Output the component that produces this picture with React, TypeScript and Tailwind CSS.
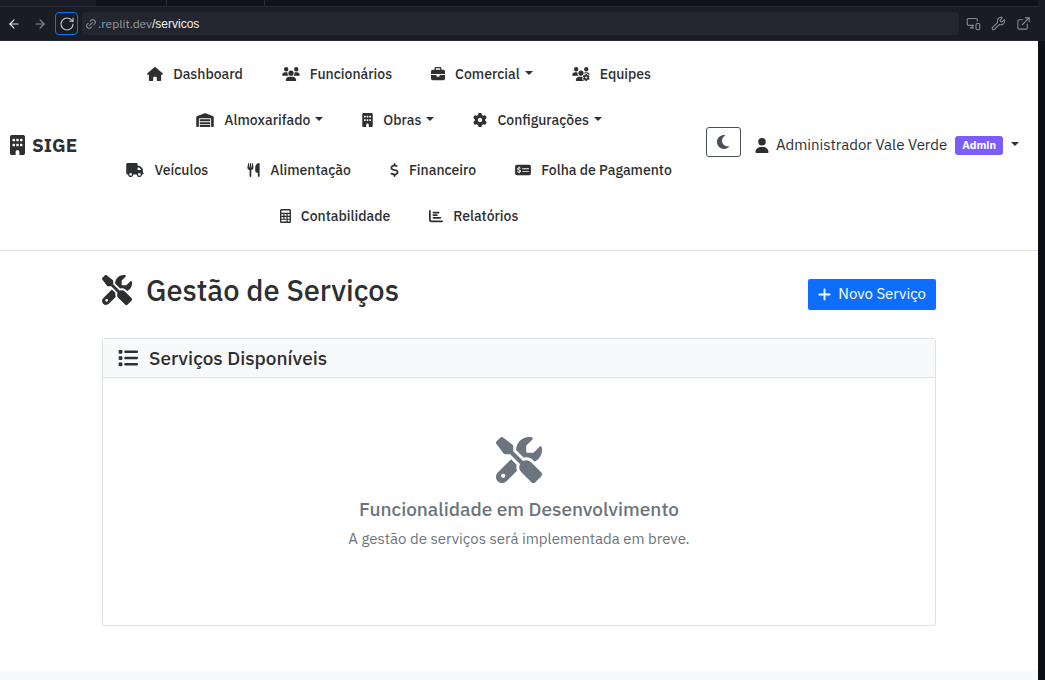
import type { ComponentType, ReactNode } from "react";
import {
  FaBriefcase,
  FaBuilding,
  FaChartBar,
  FaDollarSign,
  FaGear,
  FaHouse,
  FaList,
  FaMoneyCheckDollar,
  FaMoon,
  FaPlus,
  FaScrewdriverWrench,
  FaTruck,
  FaUser,
  FaUsers,
  FaUsersGear,
  FaUtensils,
  FaWarehouse,
} from "react-icons/fa6";
import { ArrowLeft, ArrowRight, ExternalLink, Link2, MonitorSmartphone, RotateCw, Wrench } from "lucide-react";

type IconType = ComponentType<{ className?: string }>;

function CalculatorIcon({ className }: { className?: string }) {
  return (
    <svg viewBox="0 0 11 14" fill="currentColor" fillRule="evenodd" className={className}>
      <path d="M1.5 0h8A1.5 1.5 0 0 1 11 1.5v11A1.5 1.5 0 0 1 9.5 14h-8A1.5 1.5 0 0 1 0 12.5v-11A1.5 1.5 0 0 1 1.5 0zM1.4 1.4v2.4h8.2V1.4zM1.4 5v1.8h1.9V5zM4.5 5v1.8h2V5zM7.7 5v1.8h1.9V5zM1.4 7.9v1.8h1.9V7.9zM4.5 7.9v1.8h2V7.9zM7.7 7.9v1.8h1.9V7.9zM1.4 10.8v1.8h5.1v-1.8zM7.7 10.8v1.8h1.9v-1.8z" />
    </svg>
  );
}

type NavEntry = { label: string; icon: IconType; size: string; menu?: boolean };

const navRows: NavEntry[][] = [
  [
    { label: "Dashboard", icon: FaHouse, size: "w-4" },
    { label: "Funcionários", icon: FaUsers, size: "w-[18px]" },
    { label: "Comercial", icon: FaBriefcase, size: "w-3.5", menu: true },
    { label: "Equipes", icon: FaUsersGear, size: "w-[18px]" },
  ],
  [
    { label: "Almoxarifado", icon: FaWarehouse, size: "w-[18px]", menu: true },
    { label: "Obras", icon: FaBuilding, size: "w-[11px]", menu: true },
    { label: "Configurações", icon: FaGear, size: "w-3.5", menu: true },
  ],
  [
    { label: "Veículos", icon: FaTruck, size: "w-[18px]" },
    { label: "Alimentação", icon: FaUtensils, size: "w-[13px]" },
    { label: "Financeiro", icon: FaDollarSign, size: "w-[9px]" },
    { label: "Folha de Pagamento", icon: FaMoneyCheckDollar, size: "w-4" },
  ],
  [
    { label: "Contabilidade", icon: CalculatorIcon, size: "w-[11px]" },
    { label: "Relatórios", icon: FaChartBar, size: "w-3.5" },
  ],
];

function Caret() {
  return <span className="mb-0.5 border-x-4 border-t-4 border-x-transparent border-t-current" />;
}

function NavItem({ label, icon: Icon, size, menu }: NavEntry) {
  const content: ReactNode = (
    <>
      <span className={`mr-2.5 flex ${size}`}>
        <Icon className="h-3.5 w-full" />
      </span>
      {label}
      {menu && (
        <span className="ml-[5px] flex">
          <Caret />
        </span>
      )}
    </>
  );
  const style = "flex items-center whitespace-nowrap text-[14px] leading-5 font-medium";
  return (
    <li>
      {menu ? (
        <button type="button" className={style}>{content}</button>
      ) : (
        <a href="#" className={style}>{content}</a>
      )}
    </li>
  );
}

function BrowserBar() {
  return (
    <div className="bg-[#1a1c25]">
      <div className="flex h-[7px] border-b border-[#262833] bg-[#12121a]">
        <div className="w-24 bg-[#1a1c25]" />
        <div className="w-[71px] border-r border-[#262833]" />
        <div className="w-[98px] border-r border-[#262833]" />
      </div>
      <div className="flex h-[34px] items-center border-b border-[#262833] px-[7px] text-[#8a8c96]">
        <button type="button" aria-label="Voltar" className="flex w-[26px] text-[#e8e8ec]">
          <ArrowLeft className="size-3.5 shrink-0" strokeWidth={2} />
        </button>
        <button type="button" aria-label="Avançar" className="flex w-[22px]">
          <ArrowRight className="size-3.5 shrink-0" strokeWidth={2} />
        </button>
        <button type="button" aria-label="Recarregar" className="flex size-[23px] items-center justify-center rounded border border-[#0079f2] text-[#c9cbd2]">
          <RotateCw className="size-4" strokeWidth={1.6} />
        </button>
        <div className="ml-1 flex h-[23px] flex-1 items-center rounded bg-[#23262f] pl-[3px] text-[12px]">
          <Link2 className="mr-px size-3 -rotate-45" strokeWidth={2} />
          <span className="text-[#9a9ca5]">.replit.dev</span>
          <span className="font-['Liberation_Sans',sans-serif] text-[#f2f2f4]">/servicos</span>
        </div>
        <div className="ml-[7px] flex gap-2.5">
          <button type="button" aria-label="Dispositivos"><MonitorSmartphone className="size-[15px]" strokeWidth={1.7} /></button>
          <button type="button" aria-label="Ferramentas"><Wrench className="size-[15px]" strokeWidth={1.7} /></button>
          <button type="button" aria-label="Abrir em nova aba"><ExternalLink className="size-[15px]" strokeWidth={1.7} /></button>
        </div>
      </div>
    </div>
  );
}

function Header() {
  return (
    <header className="flex items-center border-b border-[#dee2e6] pt-[23px] pr-[19px] pb-6 pl-2.5">
      <a href="#" className="flex items-center gap-[7px] text-[19px] font-bold">
        <FaBuilding className="h-5 w-[15px]" />
        SIGE
      </a>
      <nav className="ml-[15px] flex-1">
        <div className="flex flex-col gap-[26px]">
          {navRows.map((row) => (
            <ul key={row[0].label} className="flex justify-center gap-[39px] nth-2:pb-1">
              {row.map((entry) => (
                <NavItem key={entry.label} {...entry} />
              ))}
            </ul>
          ))}
        </div>
      </nav>
      <div className="flex items-center">
        <button type="button" aria-label="Alternar tema" className="mr-3.5 mb-1.5 flex h-[30px] w-[35px] items-center justify-center rounded-[3px] border border-[#495057] text-[#495057]">
          <FaMoon className="h-4 w-3" />
        </button>
        <button type="button" className="flex items-center text-[15px] whitespace-nowrap">
          <FaUser className="mr-[7px] h-[15px] w-3.5" />
          Administrador Vale Verde
          <span className="mr-2 ml-2 rounded-[3px] bg-[#7b5cff] px-[7px] text-[11px] leading-[19px] font-bold text-white">Admin</span>
          <Caret />
        </button>
      </div>
    </header>
  );
}

export default function App() {
  return (
    <div className="flex min-h-screen flex-col bg-[#0e0e16] font-['IBM_Plex_Sans','Noto_Sans',sans-serif] text-[#2d2f31]">
      <div className="bg-[#1a1c25] pr-[7px]">
        <BrowserBar />
      </div>
      <div className="mr-[7px] flex flex-1 flex-col bg-white">
        <Header />
        <main className="mx-auto w-full max-w-[834px] flex-1 pt-[21px] pb-[45px]">
          <div className="mb-[22px] flex items-center justify-between">
            <h1 className="mb-2 flex items-center gap-3.5 text-[29px] leading-9 font-medium">
              <FaScrewdriverWrench className="size-[30px]" />
              Gestão de Serviços
            </h1>
            <button type="button" className="flex h-[31px] items-center gap-[7px] rounded-[2px] bg-[#0d6efd] px-2.5 text-[15px] text-white">
              <FaPlus className="h-[15px] w-[13px]" />
              Novo Serviço
            </button>
          </div>
          <section className="rounded-[3px] border border-[#dee2e6]">
            <h2 className="flex h-[39px] items-center gap-[11px] border-b border-[#dee2e6] bg-[#f8f9fb] px-[15px] text-[19px] font-medium">
              <FaList className="size-5" />
              Serviços Disponíveis
            </h2>
            <div className="flex flex-col items-center pt-[59px] pb-[74px] text-[#6c757d]">
              <FaScrewdriverWrench className="size-[46px]" />
              <h3 className="mt-3.5 text-[19px] leading-6 font-medium">Funcionalidade em Desenvolvimento</h3>
              <p className="mt-1.5 text-[15px] leading-6">A gestão de serviços será implementada em breve.</p>
            </div>
          </section>
        </main>
        <footer className="h-[9px] bg-[#f8f9fb]" />
      </div>
    </div>
  );
}
